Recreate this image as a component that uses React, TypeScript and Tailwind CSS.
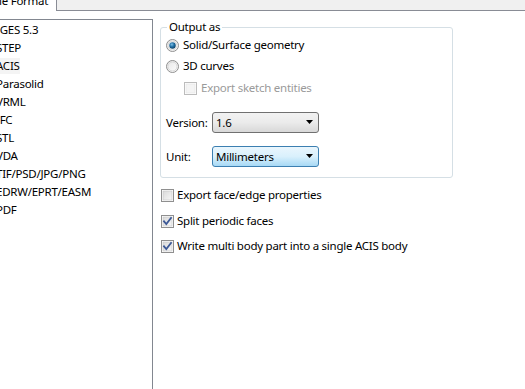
import React from "react";

const items = [
  "IGES 5.3",
  "STEP",
  "ACIS",
  "Parasolid",
  "VRML",
  "IFC",
  "STL",
  "VDA",
  "TIF/PSD/JPG/PNG",
  "EDRW/EPRT/EASM",
  "PDF",
];

function Radio({ checked }: { checked?: boolean }) {
  return (
    <svg width="13" height="13" viewBox="0 0 13 13" className="shrink-0">
      <defs>
        <linearGradient id={checked ? "rg1" : "rg0"} x1="0" y1="0" x2="1" y2="1">
          <stop offset="0" stopColor="#e6e6e6" />
          <stop offset="1" stopColor="#ffffff" />
        </linearGradient>
        <radialGradient id="dot" cx="0.4" cy="0.35" r="0.7">
          <stop offset="0" stopColor="#7ec0e8" />
          <stop offset="0.5" stopColor="#1f6ea3" />
          <stop offset="1" stopColor="#0b3b60" />
        </radialGradient>
      </defs>
      <circle cx="6.5" cy="6.5" r="6" fill={`url(#${checked ? "rg1" : "rg0"})`} stroke="#8f8f8f" strokeWidth="1" />
      <circle cx="6.5" cy="6.5" r="4.5" fill="none" stroke="#d8d8d8" strokeWidth="1" />
      {checked && <circle cx="6.5" cy="6.5" r="3.2" fill="url(#dot)" />}
    </svg>
  );
}

function Check({ checked, disabled }: { checked?: boolean; disabled?: boolean }) {
  return (
    <svg width="13" height="13" viewBox="0 0 13 13" className="shrink-0">
      <defs>
        <linearGradient id="cbg" x1="0" y1="0" x2="1" y2="1">
          <stop offset="0" stopColor="#d9d9d9" />
          <stop offset="1" stopColor="#f7f7f7" />
        </linearGradient>
      </defs>
      <rect x="0.5" y="0.5" width="12" height="12" fill="#ffffff" stroke={disabled ? "#bcbcbc" : "#8f8f8f"} />
      <rect x="2" y="2" width="9" height="9" fill={disabled ? "#f4f4f4" : "url(#cbg)"} stroke={disabled ? "#e3e3e3" : "#c4c4c4"} strokeWidth="0.6" />
      {checked && (
        <path d="M3 6.3 L5.3 9 L10 3" fill="none" stroke="#3c5896" strokeWidth="1.8" strokeLinecap="square" />
      )}
    </svg>
  );
}

function Arrow() {
  return (
    <svg width="8" height="5" viewBox="0 0 8 5" className="shrink-0">
      <path d="M0 0 H7 L3.5 4 Z" fill="#000" />
    </svg>
  );
}

export default function App() {
  return (
    <div
      className="w-[525px] h-[389px] bg-white overflow-hidden flex flex-col text-[11.5px] tracking-[-0.25px] text-black"
      style={{ fontFamily: '"Noto Sans", "Open Sans", sans-serif' }}
    >
      {/* tab strip */}
      <div className="h-[11px] flex shrink-0">
        <div className="w-[57px] h-[11px] bg-white border-r border-[#898c95] overflow-hidden relative">
          <div className="absolute left-[-1px] top-[-7px] leading-[16px] whitespace-nowrap">le Format</div>
        </div>
        <div className="flex-1 bg-[#f0f0f0] border-b border-[#898c95]" />
      </div>

      <div className="flex flex-1 min-h-0">
        {/* list */}
        <div className="w-[153px] mt-[8px] border-t border-r border-[#828790] pt-[1px] overflow-hidden shrink-0">
          {items.map((t, i) => (
            <div key={t} className="h-[18px] flex items-center whitespace-nowrap">
              <span className={`ml-[-4px] leading-[16px] ${i === 2 ? "bg-[#f4f4f4]" : ""}`}>{t}</span>
            </div>
          ))}
        </div>

        {/* right side */}
        <div className="flex-1 pl-[7px] pt-[16px]">
          <div className="relative w-[293px] h-[151px] border border-[#d5dfe5] rounded-[3px] pl-[5px] pt-[8px]">
            <div className="absolute left-[6px] top-[-9px] px-[2px] bg-white leading-[16px]">Output as</div>
            <div className="h-[18px] flex items-center gap-[4px]">
              <Radio checked />
              <span>Solid/Surface geometry</span>
            </div>
            <div className="h-[18px] mt-[3px] flex items-center gap-[4px]">
              <Radio />
              <span>3D curves</span>
            </div>
            <div className="h-[18px] mt-[4px] ml-[18px] flex items-center gap-[4px]">
              <Check disabled />
              <span className="text-[#9a9a9a]">Export sketch entities</span>
            </div>
            <div className="h-[21px] mt-[15px] flex items-center">
              <span className="w-[46px]">Version:</span>
              <div className="w-[107px] h-[21px] rounded-[3px] border border-[#707070] bg-gradient-to-b from-[#f2f2f2] via-[#ebebeb] to-[#d8d8d8] flex items-center justify-between pl-[3px] pr-[4px]">
                <span>1.6</span>
                <Arrow />
              </div>
            </div>
            <div className="h-[21px] mt-[13px] flex items-center">
              <span className="w-[46px]">Unit:</span>
              <div className="w-[107px] h-[21px] rounded-[3px] border border-[#3c7fb1] bg-gradient-to-b from-[#eaf6fd] via-[#d9f0fc] to-[#a7d9f5] flex items-center justify-between pl-[3px] pr-[4px]">
                <span>Millimeters</span>
                <Arrow />
              </div>
            </div>
          </div>

          <div className="mt-[8px] h-[18px] flex items-center gap-[3px] pl-[1px]">
            <Check />
            <span>Export face/edge properties</span>
          </div>
          <div className="mt-[8px] h-[18px] flex items-center gap-[3px] pl-[1px]">
            <Check checked />
            <span>Split periodic faces</span>
          </div>
          <div className="mt-[7px] h-[18px] flex items-center gap-[3px] pl-[1px]">
            <Check checked />
            <span>Write multi body part into a single ACIS body</span>
          </div>
        </div>
      </div>
    </div>
  );
}
